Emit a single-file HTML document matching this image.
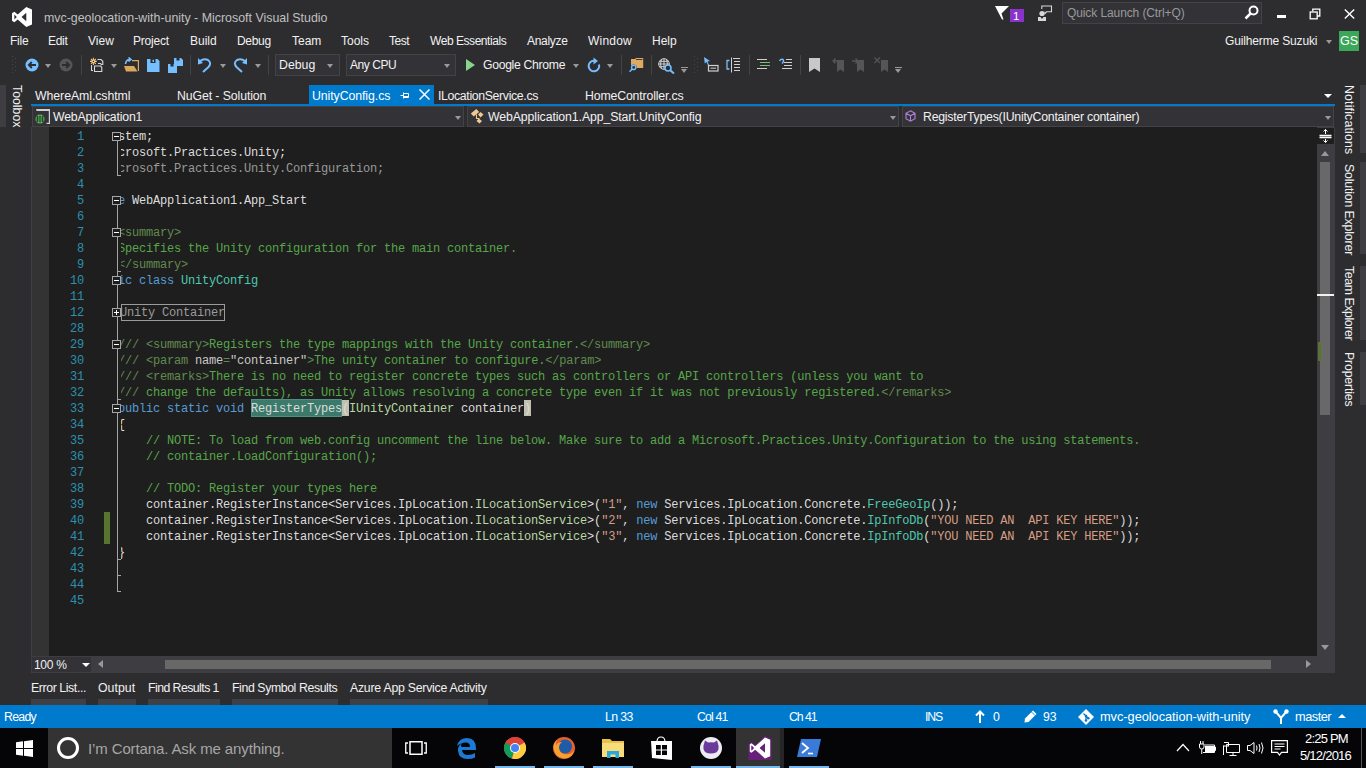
<!DOCTYPE html>
<html><head><meta charset="utf-8">
<style>
*{margin:0;padding:0;box-sizing:border-box}
html,body{width:1366px;height:768px;overflow:hidden;background:#2d2d30;font-family:"Liberation Sans",sans-serif;color:#f1f1f1;position:relative}
.a{position:absolute}
.t{position:absolute;white-space:pre;font-size:12px;line-height:16px;height:16px}
.code{position:absolute;left:62px;font-family:"Liberation Mono",monospace;font-size:12px;line-height:16px;height:16px;letter-spacing:-0.2px;white-space:pre;color:#dcdcdc}
.ln{position:absolute;left:39px;width:45px;font-family:"Liberation Mono",monospace;font-size:12px;line-height:16px;color:#2b91af;text-align:right;letter-spacing:-0.2px}
.c{color:#57a64a}.k{color:#569cd6}.ty{color:#4ec9b0}.s{color:#d69d85}.x{color:#608b4e}.g{color:#9b9b9b}.i{color:#b8d7a3}.w{color:#c8c8c8}
.dim{color:#999999}
.hl{background:#3a7a6c;box-shadow:0 0 0 1px #5a9a8c inset}
.pm{background:#b5b5a5;color:#1e1e1e}
.fb{position:absolute;left:112px;width:9px;height:9px;border:1px solid #a5a5a5;background:#1e1e1e}
.fb:after{content:"";position:absolute;left:1px;top:3px;width:5px;height:1px;background:#fff}
.vl{position:absolute;left:117px;width:1px;background:#a5a5a5}
.tk{position:absolute;left:117px;width:4px;height:1px;background:#a5a5a5}
.dd{position:absolute;width:0;height:0;border-left:3.5px solid transparent;border-right:3.5px solid transparent;border-top:4px solid #999}
.sep{position:absolute;top:55px;width:1px;height:20px;background:#434346}

</style></head><body>
<!-- ===== TITLE BAR ===== -->
<svg class="a" style="left:12px;top:7px" width="20" height="20" viewBox="0 0 21 21"><path fill="#fff" d="M15 0 L21 2.5 V18.5 L15 21 L6 13 L2.5 16 L0 14.5 V6.5 L2.5 5 L6 8 Z M15 6 L10 10.5 L15 15 Z M2.5 8 V13 L5 10.5 Z"/></svg>
<div class="t" style="left:44px;top:10px;font-size:12.4px;color:#c0c0c0">mvc-geolocation-with-unity - Microsoft Visual Studio</div>

<!-- filter + badge -->
<svg class="a" style="left:994px;top:5px" width="16" height="16" viewBox="0 0 16 16"><path fill="#fff" d="M1 1 H15 L7.5 8.5 L9.5 14.5 L8 14.5 Z"/></svg>
<div class="a" style="left:1010px;top:9px;width:14px;height:13px;background:#8733cc"></div>
<div class="t" style="left:1013px;top:8px;font-size:11.5px;color:#fff">1</div>
<!-- feedback icon -->
<svg class="a" style="left:1037px;top:5px" width="17" height="16" viewBox="0 0 17 16"><circle cx="5" cy="8.5" r="2.6" fill="#d8d8d8"/><path fill="#d8d8d8" d="M1 12 H3.5 L5 14 L6.5 12 H9 V16 H1 Z"/><path fill="none" stroke="#d8d8d8" stroke-width="1.1" d="M4.8 4 V1 H14.5 V6.8 H9.5 L8 8.5 V6.8"/></svg>
<!-- quick launch -->
<div class="a" style="left:1062px;top:2px;width:200px;height:22px;background:#333337;border:1px solid #434346"></div>
<div class="t" style="left:1067px;top:5px;font-size:12px;color:#999999;letter-spacing:-0.1px">Quick Launch (Ctrl+Q)</div>
<svg class="a" style="left:1244px;top:5px" width="15" height="15" viewBox="0 0 15 15"><circle cx="9.5" cy="5.5" r="4" fill="none" stroke="#fff" stroke-width="2"/><path stroke="#fff" stroke-width="2.5" d="M7 8 L1.5 13.5"/></svg>
<!-- window buttons -->
<div class="a" style="left:1277px;top:15px;width:9px;height:3px;background:#fff"></div>
<svg class="a" style="left:1309px;top:8px" width="12" height="12" viewBox="0 0 12 12"><path fill="none" stroke="#fff" stroke-width="1.3" d="M3.8 3.5 V1.2 H10.8 V8 H8.2"/><rect x="1.2" y="4" width="7" height="6.8" fill="none" stroke="#fff" stroke-width="1.3"/></svg>
<svg class="a" style="left:1344px;top:9px" width="11" height="10" viewBox="0 0 11 10"><path stroke="#fff" stroke-width="1.4" d="M0.8 0.5 L10.2 9.5 M10.2 0.5 L0.8 9.5"/></svg>

<!-- ===== MENU ===== -->
<div class="t" style="left:10px;top:33px;letter-spacing:-0.25px">File</div>
<div class="t" style="left:48px;top:33px;letter-spacing:-0.3px">Edit</div>
<div class="t" style="left:88px;top:33px">View</div>
<div class="t" style="left:133px;top:33px;letter-spacing:-0.2px">Project</div>
<div class="t" style="left:190px;top:33px">Build</div>
<div class="t" style="left:237px;top:33px;font-size:12px;letter-spacing:-0.3px">Debug</div>
<div class="t" style="left:292px;top:33px">Team</div>
<div class="t" style="left:341px;top:33px">Tools</div>
<div class="t" style="left:389px;top:33px;letter-spacing:-0.5px">Test</div>
<div class="t" style="left:430px;top:33px;letter-spacing:-0.45px">Web Essentials</div>
<div class="t" style="left:527px;top:33px;letter-spacing:-0.3px">Analyze</div>
<div class="t" style="left:588px;top:33px;letter-spacing:0.2px">Window</div>
<div class="t" style="left:652px;top:33px">Help</div>
<div class="t" style="left:1225px;top:33px;letter-spacing:-0.15px">Guilherme Suzuki</div>
<div class="dd" style="left:1326px;top:40px;border-top-color:#999"></div>
<div class="a" style="left:1339px;top:31px;width:20px;height:20px;background:#3aa858"></div>
<div class="t" style="left:1340px;top:33px;font-size:12.5px;color:#fff">GS</div>

<!-- ===== TOOLBAR ===== -->
<svg class="a" style="left:12px;top:56px" width="5" height="18"><g fill="#46464a"><rect x="0" y="0" width="1" height="1"/><rect x="3" y="2" width="1" height="1"/><rect x="0" y="4" width="1" height="1"/><rect x="3" y="6" width="1" height="1"/><rect x="0" y="8" width="1" height="1"/><rect x="3" y="10" width="1" height="1"/><rect x="0" y="12" width="1" height="1"/><rect x="3" y="14" width="1" height="1"/><rect x="0" y="16" width="1" height="1"/></g></svg>
<svg class="a" style="left:25px;top:58px" width="14" height="14" viewBox="0 0 14 14"><circle cx="7" cy="7" r="6.5" fill="#75beff"/><path fill="none" stroke="#2d2d30" stroke-width="1.8" d="M11 7 H4 M6.8 4 L3.8 7 L6.8 10"/></svg>
<div class="dd" style="left:45px;top:64px"></div>
<svg class="a" style="left:59px;top:58px" width="14" height="14" viewBox="0 0 14 14"><circle cx="7" cy="7" r="6.5" fill="#555558"/><path fill="none" stroke="#2d2d30" stroke-width="1.8" d="M3 7 H10 M7.2 4 L10.2 7 L7.2 10"/></svg>
<div class="sep" style="left:81px"></div>
<svg class="a" style="left:89px;top:57px" width="16" height="17" viewBox="0 0 16 17"><g stroke="#f5c77e" stroke-width="1.1"><path d="M4.4 0.8 V8 M1 4.4 H7.8 M2 2 L6.8 6.8 M6.8 2 L2 6.8"/></g><circle cx="4.4" cy="4.4" r="1.6" fill="#f5c77e"/><circle cx="4.4" cy="4.4" r="0.7" fill="#2d2d30"/><path fill="none" stroke="#d8d8d8" stroke-width="1.1" d="M8.5 2.5 H12 L13.8 4.3 V8 M9 6.5 H11.5 L13 8 M2.5 8 V13.5 H4 M5.5 9 H11.5 L12.8 10.3 V14.5 H5.5 Z"/></svg>
<div class="dd" style="left:111px;top:64px"></div>
<svg class="a" style="left:124px;top:57px" width="15" height="15" viewBox="0 0 15 15"><path fill="none" stroke="#d9a85b" stroke-width="1.2" d="M8 3.6 H14.4 V14"/><path fill="#d9a85b" d="M0 9 H10 L13.5 14.5 H2 Z"/><path fill="none" stroke="#75beff" stroke-width="1.6" d="M1.5 7 Q2 2.5 6 2.5 M4.5 0.5 L7 2.5 L4.5 4.5"/></svg>
<svg class="a" style="left:147px;top:59px" width="13" height="13" viewBox="0 0 13 13"><path fill="#75beff" d="M0 0 H10.5 L12.5 2 V13 H0 Z"/><rect x="3.5" y="0" width="5" height="4" fill="#2d2d30"/><rect x="5.5" y="0.8" width="1.5" height="2.2" fill="#75beff"/></svg>
<svg class="a" style="left:168px;top:58px" width="15" height="15" viewBox="0 0 15 15"><path fill="#75beff" d="M6 0 H13 L15 2 V8 H6 Z M0 6 H7 L9 8 V15 H0 Z"/><rect x="8.5" y="0" width="3" height="2.5" fill="#2d2d30"/><rect x="2.5" y="6" width="3" height="2.5" fill="#2d2d30"/></svg>
<div class="sep" style="left:190px"></div>
<svg class="a" style="left:198px;top:57px" width="14" height="16" viewBox="0 0 14 16"><path fill="none" stroke="#75beff" stroke-width="2" d="M2 4 Q6 1 10 3 Q14 6 10.5 10 L5 15"/><path fill="#75beff" d="M0 1 L5 6 L0 7.5 Z"/></svg>
<div class="dd" style="left:220px;top:64px"></div>
<svg class="a" style="left:233px;top:57px" width="14" height="16" viewBox="0 0 14 16"><path fill="none" stroke="#75beff" stroke-width="2" d="M12 4 Q8 1 4 3 Q0 6 3.5 10 L9 15"/><path fill="#75beff" d="M14 1 L9 6 L14 7.5 Z"/></svg>
<div class="dd" style="left:255px;top:64px"></div>
<div class="sep" style="left:268px"></div>
<!-- Debug combo -->
<div class="a" style="left:275px;top:54px;width:65px;height:22px;background:#333337;border:1px solid #434346"></div>
<div class="t" style="left:279px;top:57px;font-size:12.3px">Debug</div>
<div class="dd" style="left:327px;top:64px"></div>
<div class="a" style="left:346px;top:54px;width:110px;height:22px;background:#333337;border:1px solid #434346"></div>
<div class="t" style="left:350px;top:57px;font-size:12px;letter-spacing:-0.45px">Any CPU</div>
<div class="dd" style="left:444px;top:64px"></div>
<svg class="a" style="left:466px;top:59px" width="10" height="12" viewBox="0 0 10 12"><path fill="#8ad38a" d="M0 0 L9 6 L0 12 Z"/></svg>
<div class="t" style="left:483px;top:57px;font-size:12.2px;letter-spacing:-0.3px">Google Chrome</div>
<div class="dd" style="left:573px;top:64px"></div>
<svg class="a" style="left:587px;top:57px" width="14" height="16" viewBox="0 0 14 16"><path fill="none" stroke="#75beff" stroke-width="2" d="M12 7.5 A5.3 5.3 0 1 1 7 3.7"/><path fill="#75beff" d="M6.5 0.5 L11 4 L6.5 7.5 Z"/></svg>
<div class="dd" style="left:607px;top:64px"></div>
<div class="sep" style="left:621px"></div>
<svg class="a" style="left:629px;top:57px" width="16" height="16" viewBox="0 0 16 16"><path fill="#dcaa62" d="M2 2 H6 L7 1 H14.2 V11 H2 Z"/><path fill="none" stroke="#2d2d30" stroke-width="0.9" d="M7 2.5 H13.5"/><circle cx="4.7" cy="10.4" r="3" fill="#2d2d30"/><circle cx="4.7" cy="10.4" r="2.1" fill="none" stroke="#75beff" stroke-width="1.4"/><path stroke="#75beff" stroke-width="1.5" d="M3.2 12 L0.6 14.8"/></svg>
<div class="sep" style="left:651px"></div>
<svg class="a" style="left:658px;top:58px" width="17" height="16" viewBox="0 0 17 16"><circle cx="6" cy="6" r="5.3" fill="none" stroke="#d0d0d0" stroke-width="1"/><path fill="none" stroke="#d0d0d0" stroke-width="1" d="M0.7 6 H11.3 M6 0.7 V11.3 M1.5 3.3 H10.5 M1.5 8.7 H10.5 M3.5 1.5 Q1.5 6 3.5 10.5 M8.5 1.5 Q10.5 6 8.5 10.5"/><circle cx="10" cy="10" r="3" fill="#2d2d30" stroke="#75beff" stroke-width="1.6"/><path stroke="#75beff" stroke-width="2" d="M12.2 12.2 L16 15.5"/></svg>
<div class="a" style="left:681px;top:67px;width:7px;height:1px;background:#999"></div>
<div class="dd" style="left:681px;top:69px"></div>
<svg class="a" style="left:694px;top:56px" width="4" height="18"><g fill="#46464a"><rect x="0" y="0" width="1" height="1"/><rect x="3" y="2" width="1" height="1"/><rect x="0" y="4" width="1" height="1"/><rect x="3" y="6" width="1" height="1"/><rect x="0" y="8" width="1" height="1"/><rect x="3" y="10" width="1" height="1"/><rect x="0" y="12" width="1" height="1"/><rect x="3" y="14" width="1" height="1"/><rect x="0" y="16" width="1" height="1"/></g></svg>
<svg class="a" style="left:704px;top:57px" width="15" height="15" viewBox="0 0 15 15"><path fill="#75beff" d="M0 0 L6 4 L3.5 4.5 L5 8 L4 8.5 L2.5 5 L0.8 6.5 Z"/><rect x="4.5" y="8.5" width="9.5" height="5.5" fill="none" stroke="#d0d0d0" stroke-width="1.2"/><path stroke="#d0d0d0" d="M6.5 11.2 H12"/></svg>
<svg class="a" style="left:726px;top:57px" width="15" height="16" viewBox="0 0 15 16"><path fill="none" stroke="#75beff" stroke-width="1.3" d="M3.5 3.5 H1 V12 H3.5"/><path fill="none" stroke="#d0d0d0" stroke-width="1" d="M5.5 0.5 V15.5 M7 1.5 H14 M8 4.5 H14 M8 7.5 H14 M8 10.5 H14 M8 13.5 H14"/></svg>
<div class="sep" style="left:749px"></div>
<svg class="a" style="left:757px;top:59px" width="13" height="12" viewBox="0 0 13 12"><path stroke="#d0d0d0" stroke-width="1" d="M0 0.5 H10 M3 3.5 H13 M3 6.5 H13 M0 9.5 H10"/><path stroke="#73c373" stroke-width="1" d="M3 3.5 H13 M3 6.5 H13"/></svg>
<svg class="a" style="left:779px;top:58px" width="13" height="13" viewBox="0 0 13 13"><path fill="none" stroke="#75beff" stroke-width="1.4" d="M0.5 3 Q2 0.5 4 1.5 Q5.5 3 3 5.5"/><path stroke="#d0d0d0" stroke-width="1" d="M5 4.5 H13 M5 7.5 H13 M3 10.5 H13 M7 1.5 H13"/></svg>
<div class="sep" style="left:800px"></div>
<svg class="a" style="left:809px;top:58px" width="12" height="14" viewBox="0 0 12 14"><path fill="#c8c8c8" d="M0 0 H11 V14 L5.5 10.5 L0 14 Z"/></svg>
<svg class="a" style="left:832px;top:57px" width="12" height="15" viewBox="0 0 12 15"><path fill="#555558" d="M5 3 H12 V15 L8.5 12.5 L5 15 Z"/><path fill="none" stroke="#555558" stroke-width="1.3" d="M7 4 H1 M3.5 1.5 L1 4 L3.5 6.5"/></svg>
<svg class="a" style="left:852px;top:57px" width="12" height="15" viewBox="0 0 12 15"><path fill="#555558" d="M5 3 H12 V15 L8.5 12.5 L5 15 Z"/><path fill="none" stroke="#555558" stroke-width="1.3" d="M0 4 H6 M3.5 1.5 L6 4 L3.5 6.5"/></svg>
<svg class="a" style="left:874px;top:57px" width="14" height="15" viewBox="0 0 14 15"><path fill="#555558" d="M7 3 H14 V15 L10.5 12.5 L7 15 Z"/><path fill="none" stroke="#555558" stroke-width="1.3" d="M0.5 0.5 L6 6 M6 0.5 L0.5 6"/></svg>
<div class="a" style="left:895px;top:67px;width:7px;height:1px;background:#999"></div>
<div class="dd" style="left:895px;top:69px"></div>

<!-- ===== LEFT TOOLBOX STRIP ===== -->
<div class="a" style="left:0;top:85px;width:6px;height:42px;background:#3e3e42"></div>
<div class="a" style="left:10px;top:85px;width:16px;height:44px;">
 <div class="t" style="left:0;top:0;transform-origin:0 0;transform:translate(15px,0) rotate(90deg);font-size:12.3px;color:#f1f1f1">Toolbox</div>
</div>

<!-- ===== TABS ===== -->
<div class="t" style="left:35px;top:88px;font-size:12.3px;letter-spacing:-0.06px">WhereAml.cshtml</div>
<div class="t" style="left:177px;top:88px;font-size:12.3px;letter-spacing:-0.1px">NuGet - Solution</div>
<div class="a" style="left:309px;top:85px;width:125px;height:19px;background:#007acc"></div>
<div class="t" style="left:312px;top:88px;font-size:12.3px;color:#fff;letter-spacing:-0.07px">UnityConfig.cs</div>
<svg class="a" style="left:400px;top:90px" width="10" height="10" viewBox="0 0 10 10"><path fill="none" stroke="#fff" stroke-width="1" d="M0.5 5.5 H3.5 M3.5 2.5 V8.5 M3.5 3.5 H8.5 V7.5 H3.5"/><path stroke="#fff" d="M3.5 6.5 H8.5"/></svg>
<svg class="a" style="left:419px;top:89px" width="11" height="11" viewBox="0 0 11 11"><path stroke="#fff" stroke-width="1.5" d="M0.5 0.5 L10.5 10.5 M10.5 0.5 L0.5 10.5"/></svg>
<div class="t" style="left:438px;top:88px;font-size:12.3px;letter-spacing:-0.35px">ILocationService.cs</div>
<div class="t" style="left:585px;top:88px;font-size:12.3px;letter-spacing:-0.15px">HomeController.cs</div>
<div class="a" style="left:1324px;top:94px;width:0;height:0;border-left:4px solid transparent;border-right:4px solid transparent;border-top:4.5px solid #fff"></div>
<div class="a" style="left:31px;top:104px;width:1304px;height:2px;background:#007acc"></div>

<!-- ===== NAV BAR ===== -->
<div class="a" style="left:31px;top:106px;width:1304px;height:21px;background:#2d2d30"></div>
<div class="a" style="left:32px;top:106px;width:432px;height:21px;background:#333337;border:1px solid #434346"></div>
<div class="a" style="left:467px;top:106px;width:432px;height:21px;background:#333337;border:1px solid #434346"></div>
<div class="a" style="left:902px;top:106px;width:432px;height:21px;background:#333337;border:1px solid #434346"></div>
<svg class="a" style="left:35px;top:109px" width="16" height="15" viewBox="0 0 16 15"><path fill="none" stroke="#d0d0d0" stroke-width="1.2" d="M1.5 0.6 H14.4 V14.4 H11.5"/><rect x="1.5" y="0" width="13" height="2" fill="#d0d0d0"/><circle cx="5" cy="10" r="4.5" fill="#6ac46a"/><path stroke="#1e3a1e" stroke-width="0.8" fill="none" d="M0.5 10 H9.5 M5 5.5 V14.5 M2.5 6.5 V13.5 M7.5 6.5 V13.5 M1 8 H9 M1 12 H9"/></svg>
<div class="t" style="left:53px;top:109px;font-size:12.3px;letter-spacing:-0.19px">WebApplication1</div>
<div class="dd" style="left:455px;top:116px"></div>
<svg class="a" style="left:470px;top:108px" width="16" height="16" viewBox="0 0 16 16"><path fill="#f0c890" d="M0.8 5.5 L6.3 1 L9.2 4 L3.7 8.5 Z M10.5 4 L13.5 6.5 L10.5 9.5 L8 6.5 Z M8.8 10.5 L12 13 L9.5 15.5 L6.5 13 Z"/><path fill="none" stroke="#f0c890" stroke-width="1.1" d="M6.5 6.5 V10.5 H9.5"/></svg>
<div class="t" style="left:488px;top:109px;font-size:12.3px;letter-spacing:-0.1px">WebApplication1.App_Start.UnityConfig</div>
<div class="dd" style="left:890px;top:116px"></div>
<svg class="a" style="left:905px;top:110px" width="11" height="12" viewBox="0 0 11 12"><path fill="none" stroke="#b180d7" stroke-width="1.1" d="M5.5 0.8 L10 3.3 V8.7 L5.5 11.2 L1 8.7 V3.3 Z M1 3.3 L5.5 5.8 L10 3.3 M5.5 5.8 V11.2"/></svg>
<div class="t" style="left:923px;top:109px;font-size:12.3px;letter-spacing:-0.23px">RegisterTypes(IUnityContainer container)</div>
<div class="dd" style="left:1325px;top:116px"></div>

<!-- ===== EDITOR ===== -->
<div class="a" style="left:31px;top:127px;width:1px;height:529px;background:#3f3f46"></div>
<div class="a" style="left:32px;top:127px;width:17px;height:529px;background:#333333"></div>
<div class="a" style="left:49px;top:127px;width:1268px;height:529px;background:#1e1e1e"></div>
<div class="a" style="left:104px;top:512px;width:6px;height:32px;background:#577430"></div>
<div class="ln" style="top:129px">1</div>
<div class="ln" style="top:145px">2</div>
<div class="ln" style="top:161px">3</div>
<div class="ln" style="top:177px">4</div>
<div class="ln" style="top:193px">5</div>
<div class="ln" style="top:209px">6</div>
<div class="ln" style="top:225px">7</div>
<div class="ln" style="top:241px">8</div>
<div class="ln" style="top:257px">9</div>
<div class="ln" style="top:273px">10</div>
<div class="ln" style="top:289px">11</div>
<div class="ln" style="top:305px">12</div>
<div class="ln" style="top:321px">28</div>
<div class="ln" style="top:337px">29</div>
<div class="ln" style="top:353px">30</div>
<div class="ln" style="top:369px">31</div>
<div class="ln" style="top:385px">32</div>
<div class="ln" style="top:401px">33</div>
<div class="ln" style="top:417px">34</div>
<div class="ln" style="top:433px">35</div>
<div class="ln" style="top:449px">36</div>
<div class="ln" style="top:465px">37</div>
<div class="ln" style="top:481px">38</div>
<div class="ln" style="top:497px">39</div>
<div class="ln" style="top:513px">40</div>
<div class="ln" style="top:529px">41</div>
<div class="ln" style="top:545px">42</div>
<div class="ln" style="top:561px">43</div>
<div class="ln" style="top:577px">44</div>
<div class="ln" style="top:593px">45</div>
<!-- folding -->
<div class="vl" style="top:141px;height:35px"></div><div class="tk" style="top:175px"></div>
<div class="vl" style="top:205px;height:387px"></div>
<div class="tk" style="top:271px"></div>
<div class="tk" style="top:399px"></div>
<div class="tk" style="top:559px"></div>
<div class="tk" style="top:575px"></div>
<div class="tk" style="top:591px"></div>
<div class="fb" style="top:132px"></div>
<div class="fb" style="top:196px"></div>
<div class="fb" style="top:228px"></div>
<div class="fb" style="top:276px"></div>
<div class="fb" style="top:308px"></div>
<div class="a" style="left:116px;top:310px;width:1px;height:5px;background:#fff"></div>
<div class="fb" style="top:340px"></div>
<div class="fb" style="top:404px"></div>
<div class="a" style="left:121px;top:127px;width:1196px;height:529px;overflow:hidden">
 <div class="a" style="left:-121px;top:-127px;width:1317px;height:656px">
  <div class="a" style="left:121px;top:304px;width:104px;height:17px;border:1px solid #9b9b9b"></div>
  <div class="code g" style="left:120px;top:305px;letter-spacing:-0.2px">Unity Container</div>
  <div class="a" style="left:251px;top:399px;width:91px;height:18px;background:#3b7a6b;border:1px solid #4f9082"></div>
  <div class="a" style="left:342px;top:400px;width:7px;height:16px;background:#c0c0b0"></div>
  <div class="a" style="left:524px;top:400px;width:7px;height:16px;background:#c0c0b0"></div>
<div class="code" style="top:129px"><span class="k">using</span> System;</div>
<div class="code" style="top:145px"><span class="k">using</span> Microsoft.Practices.Unity;</div>
<div class="code" style="top:161px"><span class="k">using</span><span class="dim"> Microsoft.Practices.Unity.Configuration;</span></div>
<div class="code" style="top:177px"></div>
<div class="code" style="top:193px"><span class="k">namespace</span> WebApplication1.App_Start</div>
<div class="code" style="top:209px">{</div>
<div class="code" style="top:225px">    <span class="x">/// &lt;summary&gt;</span></div>
<div class="code" style="top:241px">    <span class="x">///</span><span class="c"> Specifies the Unity configuration for the main container.</span></div>
<div class="code" style="top:257px">    <span class="x">/// &lt;/summary&gt;</span></div>
<div class="code" style="top:273px">    <span class="k">public class</span> <span class="ty">UnityConfig</span></div>
<div class="code" style="top:289px">    {</div>
<div class="code" style="top:321px"></div>
<div class="code" style="top:337px">        <span class="x">/// &lt;summary&gt;</span><span class="c">Registers the type mappings with the Unity container.</span><span class="x">&lt;/summary&gt;</span></div>
<div class="code" style="top:353px">        <span class="x">/// &lt;param </span><span class="w">name</span><span class="x">=</span><span class="w">&quot;container&quot;</span><span class="x">&gt;</span><span class="c">The unity container to configure.</span><span class="x">&lt;/param&gt;</span></div>
<div class="code" style="top:369px">        <span class="x">/// &lt;remarks&gt;</span><span class="c">There is no need to register concrete types such as controllers or API controllers (unless you want to</span></div>
<div class="code" style="top:385px">        <span class="x">///</span><span class="c"> change the defaults), as Unity allows resolving a concrete type even if it was not previously registered.</span><span class="x">&lt;/remarks&gt;</span></div>
<div class="code" style="top:401px">        <span class="k">public static void</span> RegisterTypes(<span class="i">IUnityContainer</span> container)</div>
<div class="code" style="top:417px">        {</div>
<div class="code" style="top:433px">            <span class="c">// NOTE: To load from web.config uncomment the line below. Make sure to add a Microsoft.Practices.Unity.Configuration to the using statements.</span></div>
<div class="code" style="top:449px">            <span class="c">// container.LoadConfiguration();</span></div>
<div class="code" style="top:465px"></div>
<div class="code" style="top:481px">            <span class="c">// TODO: Register your types here</span></div>
<div class="code" style="top:497px">            container.RegisterInstance&lt;Services.IpLocation.<span class="i">ILocationService</span>&gt;(<span class="s">&quot;1&quot;</span>, <span class="k">new</span> Services.IpLocation.Concrete.<span class="ty">FreeGeoIp</span>());</div>
<div class="code" style="top:513px">            container.RegisterInstance&lt;Services.IpLocation.<span class="i">ILocationService</span>&gt;(<span class="s">&quot;2&quot;</span>, <span class="k">new</span> Services.IpLocation.Concrete.<span class="ty">IpInfoDb</span>(<span class="s">&quot;YOU NEED AN  API KEY HERE&quot;</span>));</div>
<div class="code" style="top:529px">            container.RegisterInstance&lt;Services.IpLocation.<span class="i">ILocationService</span>&gt;(<span class="s">&quot;3&quot;</span>, <span class="k">new</span> Services.IpLocation.Concrete.<span class="ty">IpInfoDb</span>(<span class="s">&quot;YOU NEED AN  API KEY HERE&quot;</span>));</div>
<div class="code" style="top:545px">        }</div>
<div class="code" style="top:561px">    }</div>
<div class="code" style="top:577px">}</div>
<div class="code" style="top:593px"></div>
 </div>
</div>

<!-- ===== VERTICAL SCROLLBAR ===== -->
<div class="a" style="left:1317px;top:127px;width:18px;height:546px;background:#3e3e42"></div>
<div class="a" style="left:1317px;top:128px;width:17px;height:16px;background:#1e1e1e"></div>
<svg class="a" style="left:1319px;top:129px" width="13" height="14" viewBox="0 0 13 14"><path stroke="#fff" stroke-width="1.3" d="M0.5 6.5 H12.5 M0.5 8.5 H12.5"/><path fill="none" stroke="#fff" stroke-width="1" d="M6.5 0.5 V5 M6.5 10 V13.5 M4.5 2.5 L6.5 0.5 L8.5 2.5 M4.5 11.5 L6.5 13.5 L8.5 11.5"/></svg>
<div class="a" style="left:1321px;top:151px;width:0;height:0;border-left:4.5px solid transparent;border-right:4.5px solid transparent;border-bottom:5px solid #999"></div>
<div class="a" style="left:1320px;top:162px;width:10px;height:253px;background:#686868"></div>
<div class="a" style="left:1317px;top:294px;width:17px;height:2px;background:#f1f1f1"></div>
<div class="a" style="left:1318px;top:342px;width:3px;height:19px;background:#577430"></div>
<div class="a" style="left:1321px;top:645px;width:0;height:0;border-left:4.5px solid transparent;border-right:4.5px solid transparent;border-top:5px solid #999"></div>

<!-- ===== HORIZONTAL SCROLLBAR ===== -->
<div class="a" style="left:31px;top:656px;width:1286px;height:17px;background:#3e3e42"></div>
<div class="a" style="left:32px;top:657px;width:59px;height:15px;background:#333337"></div>
<div class="t" style="left:34px;top:657px;font-size:12px;letter-spacing:-0.3px">100 %</div>
<div class="a" style="left:82px;top:663px;width:0;height:0;border-left:4px solid transparent;border-right:4px solid transparent;border-top:4px solid #fff"></div>
<div class="a" style="left:98px;top:660px;width:0;height:0;border-top:4.5px solid transparent;border-bottom:4.5px solid transparent;border-right:5px solid #999"></div>
<div class="a" style="left:165px;top:660px;width:1106px;height:9px;background:#686868"></div>
<div class="a" style="left:1306px;top:660px;width:0;height:0;border-top:4.5px solid transparent;border-bottom:4.5px solid transparent;border-left:5px solid #999"></div>

<!-- ===== RIGHT STRIP ===== -->
<div class="a" style="left:1360px;top:85px;width:6px;height:68px;background:#3e3e42"></div>
<div class="a" style="left:1360px;top:162px;width:6px;height:92px;background:#3e3e42"></div>
<div class="a" style="left:1360px;top:266px;width:6px;height:74px;background:#3e3e42"></div>
<div class="a" style="left:1360px;top:352px;width:6px;height:53px;background:#3e3e42"></div>
<div class="t" style="left:1357px;top:85px;transform-origin:0 0;transform:rotate(90deg);font-size:12.3px;letter-spacing:0.18px">Notifications</div>
<div class="t" style="left:1357px;top:164px;transform-origin:0 0;transform:rotate(90deg);font-size:12.3px;letter-spacing:-0.15px">Solution Explorer</div>
<div class="t" style="left:1357px;top:266px;transform-origin:0 0;transform:rotate(90deg);font-size:12.3px;letter-spacing:-0.4px">Team Explorer</div>
<div class="t" style="left:1357px;top:352px;transform-origin:0 0;transform:rotate(90deg);font-size:12.3px;letter-spacing:-0.15px">Properties</div>

<!-- ===== BOTTOM TOOL TABS ===== -->
<div class="t" style="left:31px;top:680px;font-size:12.3px;letter-spacing:-0.4px">Error List...</div>
<div class="t" style="left:98px;top:680px;font-size:12.3px;letter-spacing:0.05px">Output</div>
<div class="t" style="left:148px;top:680px;font-size:12.3px;letter-spacing:-0.55px">Find Results 1</div>
<div class="t" style="left:232px;top:680px;font-size:12.3px;letter-spacing:-0.4px">Find Symbol Results</div>
<div class="t" style="left:350px;top:680px;font-size:12.3px;letter-spacing:-0.24px">Azure App Service Activity</div>
<div class="a" style="left:31px;top:699px;width:55px;height:6px;background:#3f3f46"></div>
<div class="a" style="left:98px;top:699px;width:38px;height:6px;background:#3f3f46"></div>
<div class="a" style="left:148px;top:699px;width:72px;height:6px;background:#3f3f46"></div>
<div class="a" style="left:232px;top:699px;width:106px;height:6px;background:#3f3f46"></div>
<div class="a" style="left:350px;top:699px;width:138px;height:6px;background:#3f3f46"></div>

<!-- ===== STATUS BAR ===== -->
<div class="a" style="left:0;top:705px;width:1366px;height:23px;background:#007acc"></div>
<div class="t" style="left:4px;top:709px;font-size:12.3px;color:#fff;letter-spacing:-0.7px">Ready</div>
<div class="t" style="left:605px;top:709px;font-size:12.3px;color:#fff;letter-spacing:-0.6px">Ln 33</div>
<div class="t" style="left:697px;top:709px;font-size:12.3px;color:#fff;letter-spacing:-0.85px">Col 41</div>
<div class="t" style="left:789px;top:709px;font-size:12.3px;color:#fff;letter-spacing:-1.05px">Ch 41</div>
<div class="t" style="left:925px;top:709px;font-size:12.3px;color:#fff;letter-spacing:-1.1px">INS</div>
<svg class="a" style="left:975px;top:710px" width="10" height="13" viewBox="0 0 10 13"><path fill="none" stroke="#fff" stroke-width="2" d="M5 13 V2 M1 5.5 L5 1.5 L9 5.5"/></svg>
<div class="t" style="left:993px;top:709px;font-size:12.3px;color:#fff">0</div>
<svg class="a" style="left:1024px;top:710px" width="13" height="13" viewBox="0 0 13 13"><path fill="#fff" d="M9 0.5 L12.5 4 L4.5 12 L0.5 12.5 L1 8.5 Z"/><path stroke="#007acc" stroke-width="0.8" d="M7.5 2 L11 5.5"/></svg>
<div class="t" style="left:1043px;top:709px;font-size:12.3px;color:#fff">93</div>
<svg class="a" style="left:1078px;top:709px" width="16" height="16" viewBox="0 0 16 16"><path fill="#fff" d="M8 0 L16 8 L8 16 L0 8 Z"/><path fill="none" stroke="#007acc" stroke-width="1.3" d="M5.5 4.5 L10 9 M8 7 V11.5"/><circle cx="8" cy="7" r="1.3" fill="#007acc"/><circle cx="8" cy="11.5" r="1.3" fill="#007acc"/><circle cx="10.3" cy="9.2" r="1.3" fill="#007acc"/></svg>
<div class="t" style="left:1100px;top:709px;font-size:12.8px;color:#fff;letter-spacing:-0.04px">mvc-geolocation-with-unity</div>
<svg class="a" style="left:1273px;top:709px" width="16" height="15" viewBox="0 0 16 15"><path fill="none" stroke="#fff" stroke-width="2" d="M2.5 2.5 L8 9 L13.5 2.5 M8 9 V15"/><circle cx="2.5" cy="2.5" r="2.2" fill="#fff"/><circle cx="13.5" cy="2.5" r="2.2" fill="#fff"/></svg>
<div class="t" style="left:1295px;top:709px;font-size:12.8px;color:#fff;letter-spacing:-0.5px">master</div>
<div class="a" style="left:1338px;top:714px;width:0;height:0;border-left:4px solid transparent;border-right:4px solid transparent;border-bottom:4.5px solid #fff"></div>

<!-- ===== TASKBAR ===== -->
<div class="a" style="left:0;top:728px;width:1366px;height:40px;background:#050508"></div>
<svg class="a" style="left:16px;top:740px" width="17" height="17" viewBox="0 0 17 17"><path fill="#fff" d="M0 2.3 L7 1.3 V8 H0 Z M8 1.2 L17 0 V8 H8 Z M0 9 H7 V15.7 L0 14.7 Z M8 9 H17 V17 L8 15.8 Z"/></svg>
<div class="a" style="left:48px;top:728px;width:344px;height:40px;background:#333333"></div>
<div class="a" style="left:57px;top:737px;width:22px;height:22px;border-radius:50%;border:3px solid #fff"></div>
<div class="t" style="left:88px;top:739px;font-size:15px;line-height:20px;height:20px;color:#a6a6a6;letter-spacing:-0.12px">I’m Cortana. Ask me anything.</div>
<svg class="a" style="left:405px;top:741px" width="22" height="14" viewBox="0 0 22 14"><rect x="5" y="0.75" width="12" height="12.5" fill="none" stroke="#fff" stroke-width="1.5"/><path fill="none" stroke="#fff" stroke-width="1.3" d="M3 2 H0.75 V12 H3 M19 2 H21.25 V12 H19"/></svg>
<!-- edge -->
<svg class="a" style="left:455px;top:737px" width="22" height="22" viewBox="0 0 22 22"><path fill="#1a7ad4" d="M2 9 Q4 1 12 1 Q21 1 21 11.5 V13 H7 Q7.5 18 13 18 Q17 18 20 16 V20.5 Q17 22 12.5 22 Q4 22 3 14 Q2.5 9 7 6 Q5 8 6.5 10 H15 Q15 5.5 11 5.5 Q6 5.5 2 9 Z"/></svg>
<!-- chrome -->
<svg class="a" style="left:504px;top:737px" width="22" height="22" viewBox="0 0 22 22"><circle cx="11" cy="11" r="11" fill="#db4437"/><path fill="#0f9d58" d="M11 11 L1.5 5.5 A11 11 0 0 0 8 21.6 Z"/><path fill="#ffcd40" d="M11 11 L8 21.6 A11 11 0 0 0 20.5 5.5 L11 5.5 Z"/><path fill="#db4437" d="M11 11 L20.5 5.5 A11 11 0 0 0 1.5 5.5 Z"/><circle cx="11" cy="11" r="5" fill="#fff"/><circle cx="11" cy="11" r="4" fill="#4285f4"/></svg>
<!-- firefox -->
<svg class="a" style="left:553px;top:737px" width="22" height="22" viewBox="0 0 22 22"><circle cx="11" cy="11" r="11" fill="#e8602c"/><circle cx="12" cy="9.5" r="7" fill="#1f5ba6"/><path fill="#f9a12e" d="M0.5 10 Q1 20 11 21.5 Q20 21 21.5 12 Q20 17 14 17.5 Q7 17.5 6 11 Q6 7 9 5 Q4 5 3 9 Q2 6 4 3 Q0.5 6 0.5 10 Z"/></svg>
<!-- explorer -->
<svg class="a" style="left:602px;top:739px" width="22" height="19" viewBox="0 0 22 19"><path fill="#e8c04a" d="M0 0 H8 L10 2 H22 V18 H0 Z"/><path fill="#f8dc7a" d="M0 4 H22 V18 H0 Z"/><path fill="#29a8e0" d="M5 12 H17 V19 H13.5 V15.5 H8.5 V19 H5 Z"/></svg>
<!-- store -->
<svg class="a" style="left:651px;top:736px" width="21" height="24" viewBox="0 0 21 24"><path fill="none" stroke="#fff" stroke-width="1.2" d="M6 6 Q6 1 10 1 Q14 1 14 6"/><path fill="#fff" d="M0 5 H21 V24 L1 22 Z"/><path fill="#050508" d="M5 9 H9.8 V13.5 H5 Z M11 9 H16 V13.5 H11 Z M5 14.5 H9.8 V19 H5 Z M11 14.5 H16 V19 H11 Z"/></svg>
<!-- github -->
<svg class="a" style="left:700px;top:737px" width="22" height="22" viewBox="0 0 22 22"><circle cx="11" cy="11" r="11" fill="#ecebf2"/><path fill="#6a3a9a" d="M4 7 L5 3.5 L8 5.5 Q11 4.8 14 5.5 L17 3.5 L18 7 Q19 9 18.5 12 Q17.5 16.5 11 16.5 Q4.5 16.5 3.5 12 Q3 9 4 7 Z"/></svg>
<div class="a" style="left:736px;top:728px;width:44px;height:40px;background:#333333"></div>
<div class="a" style="left:780px;top:728px;width:4px;height:40px;background:#262628"></div>
<!-- VS -->
<svg class="a" style="left:748px;top:736px" width="24" height="24" viewBox="0 0 24 24"><path fill="#68217a" d="M17 0 L23.5 3 V13 H0.5 V8 L3.5 6 L7 9 Z"/><path fill="#68217a" d="M0.5 13 H23.5 V24 H0.5 Z"/><path fill="#fff" d="M17 1.5 L22.2 3.8 V20.2 L17 22.5 L7.2 13.8 L3.5 16.8 L1.8 15.8 V8.2 L3.5 7.2 L7.2 10.2 Z M17 7.5 L11.8 12 L17 16.5 Z M3.5 9.6 V14.4 L5.9 12 Z"/><path fill="#68217a" d="M17 7.5 L11.8 12 L17 16.5 Z M3.5 9.6 V14.4 L5.9 12 Z"/></svg>
<!-- powershell -->
<svg class="a" style="left:797px;top:739px" width="24" height="18" viewBox="0 0 24 18"><path fill="#3a7ad8" d="M4 0 H24 L20 18 H0 Z"/><path fill="none" stroke="#fff" stroke-width="1.8" d="M5 4 L11 9 L5 14"/><path stroke="#fff" stroke-width="1.6" d="M11 14.5 H16"/></svg>
<!-- running indicators -->
<div class="a" style="left:495px;top:766px;width:40px;height:2px;background:#76b9ed"></div>
<div class="a" style="left:544px;top:766px;width:40px;height:2px;background:#76b9ed"></div>
<div class="a" style="left:593px;top:766px;width:40px;height:2px;background:#76b9ed"></div>
<div class="a" style="left:691px;top:766px;width:40px;height:2px;background:#76b9ed"></div>
<div class="a" style="left:736px;top:766px;width:44px;height:2px;background:#76b9ed"></div>
<div class="a" style="left:789px;top:766px;width:40px;height:2px;background:#76b9ed"></div>
<!-- tray -->
<svg class="a" style="left:1176px;top:743px" width="14" height="9" viewBox="0 0 14 9"><path fill="none" stroke="#fff" stroke-width="1.2" d="M1 8 L7 1.5 L13 8"/></svg>
<svg class="a" style="left:1199px;top:741px" width="17" height="13" viewBox="0 0 17 13"><path fill="none" stroke="#fff" stroke-width="1" d="M1.5 0 V3 M4 0 V3 M0.5 3 H5 V6 Q5 8 2.75 8 Q0.5 8 0.5 6 Z M2.75 8 V13 M4 11.5 H15.5 V4 H6 M15.5 6 H16.5 V9.5 H15.5"/><rect x="6" y="5" width="9" height="6" fill="#fff"/></svg>
<svg class="a" style="left:1223px;top:742px" width="17" height="14" viewBox="0 0 17 14"><path fill="none" stroke="#fff" stroke-width="1" d="M3.5 2.5 H16.5 V10.5 H3.5 Z M10 10.5 V13.5 M6.5 13.5 H13.5 M1 0.5 H5.5 V4 M0.5 4 H6 M0.5 3.5 V13"/></svg>
<svg class="a" style="left:1247px;top:742px" width="17" height="12" viewBox="0 0 17 12"><path fill="none" stroke="#fff" stroke-width="1" d="M0.5 3.5 H3 L7 0.5 V11.5 L3 8.5 H0.5 Z M9.5 3.5 Q10.5 6 9.5 8.5 M12 2 Q14 6 12 10 M14.5 0.5 Q17.5 6 14.5 11.5"/></svg>
<svg class="a" style="left:1271px;top:740px" width="17" height="17" viewBox="0 0 17 17"><path fill="none" stroke="#fff" stroke-width="1.2" d="M0.6 0.6 H16.4 V12.4 H10.5 L8.5 15 L6.5 12.4 H0.6 Z M3.5 4 H13.5 M3.5 6.5 H13.5 M3.5 9 H9.5"/></svg>
<div class="t" style="left:1305px;top:731px;font-size:13px;color:#fff;letter-spacing:-0.8px">2:25 PM</div>
<div class="t" style="left:1300px;top:748px;font-size:13px;color:#fff;letter-spacing:-0.75px">5/12/2016</div>
<div class="a" style="left:1361px;top:728px;width:1px;height:40px;background:#555"></div>

</body></html>
